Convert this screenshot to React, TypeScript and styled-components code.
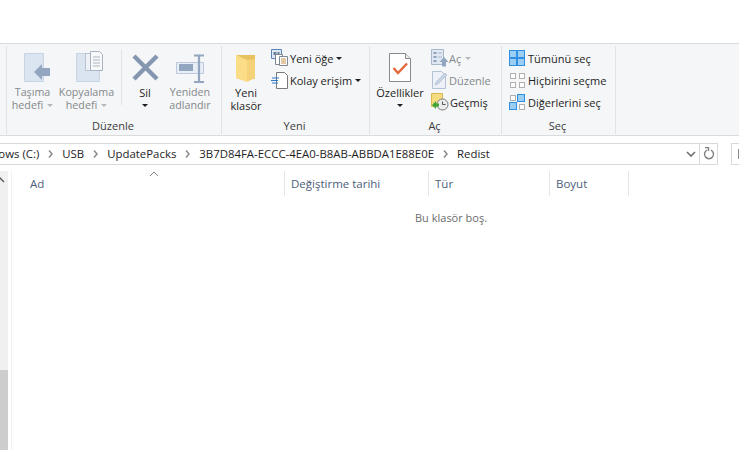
import { Fragment } from 'react';
import { createGlobalStyle, styled } from 'styled-components';
import type { ReactNode } from 'react';

const Global = createGlobalStyle`
  html, body { margin: 0; padding: 0; background: #fff; }
  body { font-family: "Open Sans", "Noto Sans", sans-serif; font-size: 11px; color: #1e1e1e; overflow: hidden; }
`;

const Page = styled.div`
  width: 739px;
  height: 450px;
  overflow: hidden;
  display: flex;
  flex-direction: column;
  padding-top: 43px;
  box-sizing: border-box;
`;

const Ribbon = styled.div`
  height: 93px;
  box-sizing: border-box;
  flex: none;
  display: flex;
  padding: 2px 0 1px 6px;
  background: #f5f6f7;
  border-top: 1px solid #dadbdc;
  border-bottom: 1px solid #dadbdc;
`;

const Group = styled.section<{ $width: number }>`
  width: ${p => p.$width}px;
  flex: none;
  box-sizing: border-box;
  border-left: 1px solid #e2e3e4;
  display: flex;
  flex-direction: column;
  &:last-child { border-right: 1px solid #e2e3e4; }
`;

const GroupBody = styled.div<{ $inset?: number }>`
  height: 72px;
  display: flex;
  flex: none;
  padding-left: ${p => p.$inset ?? 0}px;
`;

const GroupLabel = styled.div`
  text-align: center;
  font-size: 11px;
  line-height: 16px;
  padding-right: 2px;
  color: #3c3c3c;
`;

const LargeButton = styled.div<{ $width: number; $muted?: boolean }>`
  width: ${p => p.$width}px;
  flex: none;
  display: flex;
  flex-direction: column;
  align-items: center;
  padding-top: 3px;
  box-sizing: border-box;
  color: ${p => (p.$muted ? '#84888c' : '#1e1e1e')};
  font-size: ${p => (p.$muted ? 10.7 : 11)}px;
  line-height: 13px;
  text-align: center;
  white-space: nowrap;
`;

const IconSlot = styled.div`
  height: 34px;
  margin-bottom: 3px;
  display: flex;
  align-items: flex-start;
  justify-content: center;
`;

const Caret = styled.span<{ $muted?: boolean; $gap?: number }>`
  display: inline-block;
  width: 0;
  height: 0;
  margin-left: ${p => p.$gap ?? 4}px;
  vertical-align: 2px;
  border-left: 3px solid transparent;
  border-right: 3px solid transparent;
  border-top: 3px solid ${p => (p.$muted ? '#b5b7ba' : '#1e1e1e')};
`;

const CaretLine = styled.div`
  height: 13px;
  display: flex;
  align-items: center;
  justify-content: center;
`;

const InnerDivider = styled.div`
  width: 1px;
  height: 55px;
  margin: 4px 3px 0 4px;
  background: #e2e3e4;
  flex: none;
`;

const SmallColumn = styled.div<{ $left: number }>`
  display: flex;
  flex-direction: column;
  gap: 4px;
  padding: 3px 0 0 ${p => p.$left}px;
`;

const SmallRow = styled.div<{ $muted?: boolean; $gap?: number }>`
  height: 18px;
  display: flex;
  align-items: center;
  gap: ${p => p.$gap ?? 2}px;
  font-size: 11px;
  white-space: nowrap;
  color: ${p => (p.$muted ? '#84888c' : '#1e1e1e')};
  svg { flex: none; }
`;

const AddressRow = styled.div`
  height: 34px;
  flex: none;
  display: flex;
  align-items: center;
  padding-top: 1px;
  box-sizing: border-box;
`;

const AddressBox = styled.div`
  width: 734px;
  margin-left: -16px;
  height: 22px;
  box-sizing: border-box;
  border: 1px solid #d9d9d9;
  display: flex;
  align-items: center;
  flex: none;
`;

const Crumbs = styled.div`
  flex: 1;
  display: flex;
  align-items: center;
  overflow: hidden;
  font-size: 11.4px;
  white-space: nowrap;
  color: #1e1e1e;
`;

const Crumb = styled.span<{ $clip?: number }>`
  flex: none;
  ${p => (p.$clip ? `margin-left: -${p.$clip}px;` : '')}
`;

const Chevron = styled.span`
  flex: none;
  width: 23px;
  display: flex;
  justify-content: center;
`;

const DropButton = styled.div`
  width: 17px;
  flex: none;
  display: flex;
  justify-content: center;
`;

const RefreshButton = styled.div`
  width: 17px;
  height: 20px;
  flex: none;
  border-left: 1px solid #d9d9d9;
  display: flex;
  align-items: center;
  justify-content: center;
`;

const SearchBox = styled.div`
  width: 40px;
  height: 22px;
  margin-left: 13px;
  flex: none;
  box-sizing: border-box;
  border: 1px solid #d9d9d9;
  padding: 5px 0 0 6px;
  & > i { display: block; width: 4px; height: 10px; background: #8c8c8c; }
`;

const Content = styled.div`
  flex: 1;
  display: flex;
  min-height: 0;
  margin-top: 1px;
  position: relative;
`;

const Scrollbar = styled.div`
  width: 8px;
  flex: none;
  background: #f0f0f0;
  display: flex;
  flex-direction: column;
  justify-content: flex-end;
  & > svg { position: absolute; top: 6px; left: 0; }
  & > i { display: block; height: 80px; background: #cdcdcd; }
`;

const PaneDivider = styled.div`
  width: 1px;
  margin-left: 3px;
  flex: none;
  background: #f0f0f0;
`;

const FilePane = styled.div`
  flex: 1;
  position: relative;
  min-width: 0;
`;

const Header = styled.div`
  display: flex;
  height: 25px;
`;

const HeaderCell = styled.div<{ $width: number }>`
  width: ${p => p.$width}px;
  flex: none;
  box-sizing: border-box;
  border-right: 1px solid #e5e5e5;
  padding-left: 6px;
  font-size: 11.5px;
  line-height: 26px;
  color: #4c607a;
  white-space: nowrap;
  &:first-child { padding-left: 18px; }
`;

const SortMark = styled.svg`
  position: absolute;
  left: 137px;
  top: 0;
`;

const Empty = styled.div`
  width: 100%;
  padding: 14px 0 0 403px;
  box-sizing: border-box;
  font-size: 11px;
  line-height: 16px;
  color: #6d6d6d;
`;

const MoveIcon = () => (
  <svg width="34" height="34" viewBox="0 0 34 34">
    <path d="M8.500 4.500h19v28h-19z" fill="#dbe5f2" stroke="#c8d4e6" />
    <path d="M18 23l8-8v4h8v8h-8v4z" fill="#93a6c0" />
  </svg>
);

const CopyIcon = () => (
  <svg width="34" height="34" viewBox="0 0 34 34">
    <path d="M6.500 4.500h23v28h-23z" fill="#dbe5f2" stroke="#c8d4e6" />
    <path d="M15.500 4.500h11v17h-11z" fill="#eef1f6" stroke="#b9c3d2" />
    <path d="M20.500 2.500h9l3 3v16h-12z" fill="#f8f9fb" stroke="#a9b3c2" />
    <path d="M23 8h7M23 11h7M23 14h7M23 17h7" stroke="#aab4c4" />
  </svg>
);

const DeleteIcon = () => (
  <svg width="34" height="34" viewBox="0 0 34 34">
    <path d="M6 7l23 23M29 7L6 30" stroke="#8496b0" strokeWidth="4.400" />
  </svg>
);

const RenameIcon = () => (
  <svg width="34" height="34" viewBox="0 0 34 34">
    <path d="M3.500 13.500h27v11h-27z" fill="#e9eef6" stroke="#bcc9dc" />
    <path d="M6 15h14v7H6z" fill="#93a6c0" />
    <path d="M21 6.500h10M21 33h10M26 6v27" stroke="#93a6c0" strokeWidth="2.200" fill="none" />
  </svg>
);

const FolderIcon = () => (
  <svg width="34" height="34" viewBox="0 0 34 34">
    <path d="M8 6h18v24H8z" fill="#e7c25f" />
    <path d="M7 6l11 5v22L7 29z" fill="#fbdd88" />
    <path d="M18 11l8-1v19l-8 4z" fill="#f5d27a" />
  </svg>
);

const NewItemIcon = () => (
  <svg width="18" height="18" viewBox="0 0 18 18">
    <path d="M.5.500h10v9H.5z" fill="#dce8f6" stroke="#5b84b5" />
    <path d="M2.500 3h3v3h-3zM6.500 3h2v3h-2z" fill="#6d7f96" />
    <path d="M4.500 5.500h7v10h-7z" fill="#fff" stroke="#7f8791" />
    <path d="M8.500 7.500h8v9h-8z" fill="#fff" stroke="#7f8791" />
    <path d="M10 10h5M10 12h5M10 14h5" stroke="#c8914f" />
  </svg>
);

const EasyAccessIcon = () => (
  <svg width="18" height="18" viewBox="0 0 18 18">
    <path d="M5.500 1.500h8l3 3v13h-11z" fill="#fff" stroke="#7a7a7a" />
    <path d="M1 7h7M0 9.500h7M1 12h6" stroke="#2b78c8" />
  </svg>
);

const PropertiesIcon = () => (
  <svg width="34" height="34" viewBox="0 0 34 34">
    <path d="M6.500 4.500h16l5 5v23h-21z" fill="#fff" stroke="#8a8a8a" />
    <path d="M22.500 4.500v5h5" fill="#ececec" stroke="#8a8a8a" />
    <path d="M10.500 19l4.500 5 9-9.500" fill="none" stroke="#e4683a" strokeWidth="2.400" />
  </svg>
);

const OpenIcon = () => (
  <svg width="18" height="18" viewBox="0 0 18 18">
    <path d="M.5.500h12v15H.500z" fill="#dfe7f2" stroke="#a9b8cc" />
    <path d="M2.500 3h3v2h-3zM2.500 7h3v2h-3zM2.500 11h3v2h-3z" fill="#8ea2bc" />
    <path d="M7 4h4M7 8h4" stroke="#a9b8cc" />
    <path d="M13 8l4.500 5H15v4.500h-4V13H8.500z" fill="#93a6c0" />
  </svg>
);

const EditIcon = () => (
  <svg width="18" height="18" viewBox="0 0 18 18">
    <path d="M1.500.500h9l4 4v13h-13z" fill="#eef2f8" stroke="#b5c2d4" />
    <path d="M4 14l1-3 9-9 2 2-9 9z" fill="#c6d4e6" stroke="#a9bad0" strokeWidth=".6" />
  </svg>
);

const HistoryIcon = () => (
  <svg width="18" height="18" viewBox="0 0 18 18">
    <path d="M.5.500h11v13H.500z" fill="#f6dc80" stroke="#d9b84e" />
    <circle cx="11.500" cy="11.500" r="5.500" fill="#ececec" stroke="#7a7a7a" />
    <path d="M11.500 8.500v3h3" fill="none" stroke="#555" />
    <path d="M1 12l4-4v2.500h3v3H5V16z" fill="#3fa535" />
  </svg>
);

const Cells = ({ tl, tr, bl, br }: { tl: boolean; tr: boolean; bl: boolean; br: boolean }) => {
  const cell = (x: number, y: number, on: boolean) => (
    <rect
      x={x + 0.5}
      y={y + 0.5}
      width={on ? 7 : 5}
      height={on ? 7 : 5}
      fill={on ? '#9ccdf3' : '#fff'}
      stroke={on ? '#2f8fe0' : '#b0b0b0'}
    />
  );
  return (
    <svg width="17" height="17" viewBox="0 0 17 17">
      {cell(tl ? 0 : 1, tl ? 0 : 1, tl)}
      {cell(tr ? 8 : 10, tr ? 0 : 1, tr)}
      {cell(bl ? 0 : 1, bl ? 8 : 10, bl)}
      {cell(br ? 8 : 10, br ? 8 : 10, br)}
    </svg>
  );
};

const ChevronMark = () => (
  <svg width="5" height="8" viewBox="0 0 5 8">
    <path d="M1 .5L4 4 1 7.500" fill="none" stroke="#8a8a8a" strokeWidth="1.500" />
  </svg>
);

function Large({
  width,
  icon,
  lines,
  muted,
  caret,
}: {
  width: number;
  icon: ReactNode;
  lines: ReactNode[];
  muted?: boolean;
  caret?: boolean;
}) {
  return (
    <LargeButton $width={width} $muted={muted}>
      <IconSlot>{icon}</IconSlot>
      {lines.map((line, i) => (
        <div key={i}>{line}</div>
      ))}
      {caret && (
        <CaretLine>
          <Caret $gap={0} />
        </CaretLine>
      )}
    </LargeButton>
  );
}

const crumbs = ['USB', 'UpdatePacks', '3B7D84FA-ECCC-4EA0-B8AB-ABBDA1E88E0E', 'Redist'];

export default function App() {
  return (
    <Page>
      <Global />
      <Ribbon>
        <Group $width={215}>
          <GroupBody $inset={2}>
            <Large
              width={47}
              muted
              icon={<MoveIcon />}
              lines={['Taşıma', <>hedefi<Caret $muted /></>]}
            />
            <Large
              width={61}
              muted
              icon={<CopyIcon />}
              lines={['Kopyalama', <>hedefi<Caret $muted /></>]}
            />
            <InnerDivider />
            <Large width={40} icon={<DeleteIcon />} lines={['Sil']} caret />
            <Large width={50} muted icon={<RenameIcon />} lines={['Yeniden', 'adlandır']} />
          </GroupBody>
          <GroupLabel>Düzenle</GroupLabel>
        </Group>
        <Group $width={148}>
          <GroupBody>
            <Large width={48} icon={<FolderIcon />} lines={['Yeni', 'klasör']} />
            <SmallColumn $left={1}>
              <SmallRow $gap={1}><NewItemIcon />Yeni öğe<Caret $gap={2} /></SmallRow>
              <SmallRow $gap={1}><EasyAccessIcon />Kolay erişim<Caret $gap={2} /></SmallRow>
            </SmallColumn>
          </GroupBody>
          <GroupLabel>Yeni</GroupLabel>
        </Group>
        <Group $width={132}>
          <GroupBody>
            <Large width={60} icon={<PropertiesIcon />} lines={['Özellikler']} caret />
            <SmallColumn $left={1}>
              <SmallRow $muted $gap={0}><OpenIcon />Aç<Caret $muted /></SmallRow>
              <SmallRow $muted $gap={0}><EditIcon />Düzenle</SmallRow>
              <SmallRow $gap={1}><HistoryIcon />Geçmiş</SmallRow>
            </SmallColumn>
          </GroupBody>
          <GroupLabel>Aç</GroupLabel>
        </Group>
        <Group $width={115}>
          <GroupBody>
            <SmallColumn $left={7}>
              <SmallRow><Cells tl tr bl br />Tümünü seç</SmallRow>
              <SmallRow><Cells tl={false} tr={false} bl={false} br={false} />Hiçbirini seçme</SmallRow>
              <SmallRow><Cells tl={false} tr bl br={false} />Diğerlerini seç</SmallRow>
            </SmallColumn>
          </GroupBody>
          <GroupLabel>Seç</GroupLabel>
        </Group>
      </Ribbon>
      <AddressRow>
        <AddressBox>
          <Crumbs>
            <Crumb $clip={14}>Windows (C:)</Crumb>
            {crumbs.map(c => (
              <Fragment key={c}>
                <Chevron><ChevronMark /></Chevron>
                <Crumb>{c}</Crumb>
              </Fragment>
            ))}
          </Crumbs>
          <DropButton>
            <svg width="10" height="6" viewBox="0 0 10 6">
              <path d="M1 1l4 4 4-4" fill="none" stroke="#6e6e6e" strokeWidth="1.600" />
            </svg>
          </DropButton>
          <RefreshButton>
            <svg width="12" height="13" viewBox="0 0 12 13">
              <path d="M4 3.200a4.500 4.500 0 1 0 4 0" fill="none" stroke="#808080" strokeWidth="1.400" />
              <path d="M2 .5h3.500V4" fill="none" stroke="#808080" strokeWidth="1.400" />
            </svg>
          </RefreshButton>
        </AddressBox>
        <SearchBox><i /></SearchBox>
      </AddressRow>
      <Content>
        <Scrollbar>
          <svg width="8" height="6" viewBox="0 0 8 6">
            <path d="M-.5 .5L4 5" fill="none" stroke="#555" strokeWidth="1.300" />
          </svg>
          <i />
        </Scrollbar>
        <PaneDivider />
        <FilePane>
          <SortMark width="10" height="6" viewBox="0 0 10 6">
            <path d="M1 5l4-4 4 4" fill="none" stroke="#8a8a8a" />
          </SortMark>
          <Header>
            <HeaderCell $width={273}>Ad</HeaderCell>
            <HeaderCell $width={144}>Değiştirme tarihi</HeaderCell>
            <HeaderCell $width={121}>Tür</HeaderCell>
            <HeaderCell $width={79}>Boyut</HeaderCell>
          </Header>
          <Empty>Bu klasör boş.</Empty>
        </FilePane>
      </Content>
    </Page>
  );
}
